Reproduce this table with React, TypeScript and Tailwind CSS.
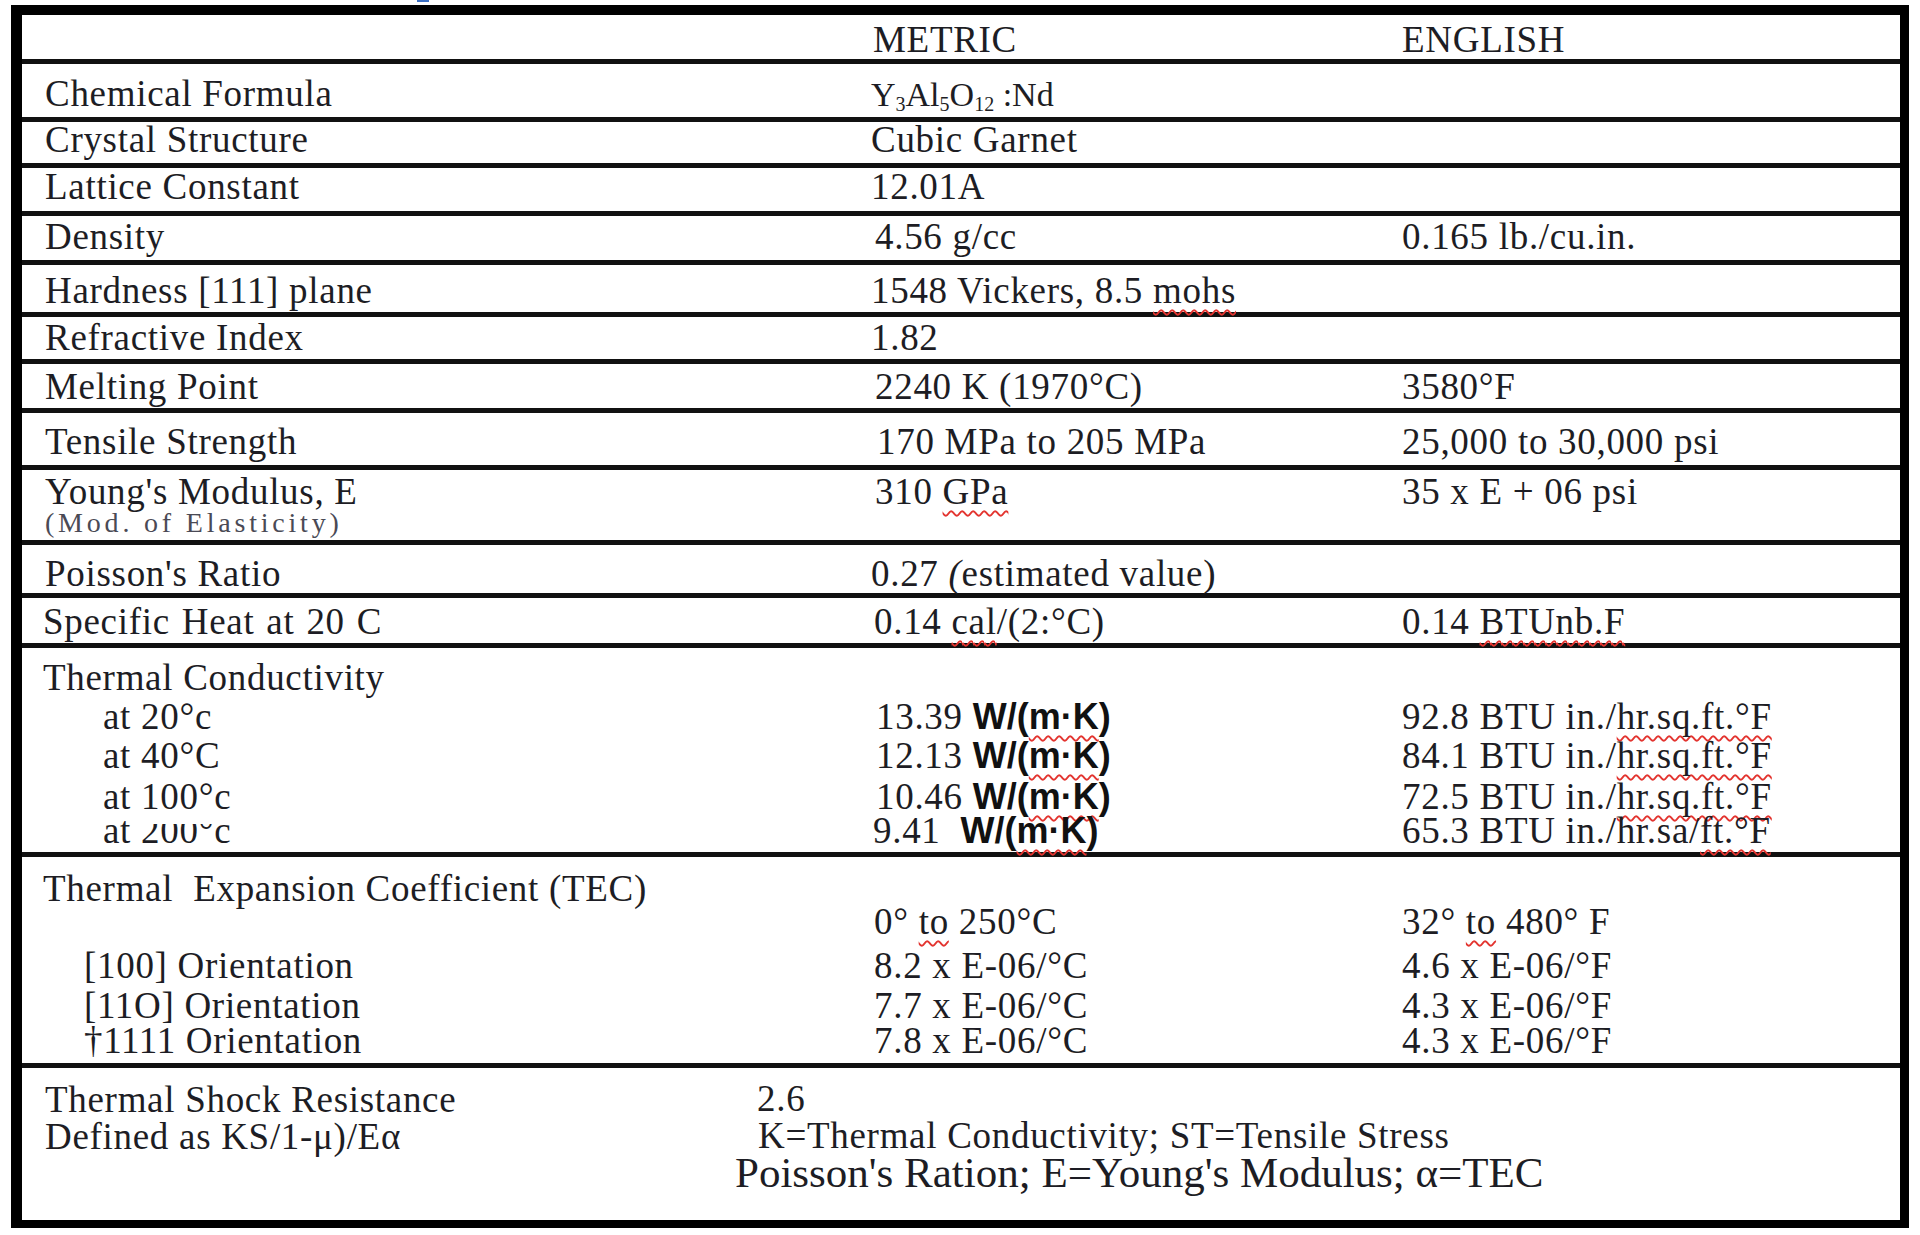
import type { ReactNode } from 'react';

function Sq({ children }: { children: ReactNode }) {
  return (
    <span className="underline decoration-wavy decoration-[#e3342f] decoration-[1.5px] underline-offset-[6px] [text-decoration-skip-ink:none]">
      {children}
    </span>
  );
}

function Line() {
  return <div className="h-[5px] bg-[#111]" />;
}

function Row({
  h,
  pt,
  label,
  metric,
  english,
}: {
  h: string;
  pt: string;
  label?: ReactNode;
  metric?: ReactNode;
  english?: ReactNode;
}) {
  return (
    <div className={`grid grid-cols-[849px_531px_1fr] ${h} ${pt}`}>
      <div className="pl-[23px] whitespace-pre">{label}</div>
      <div className="whitespace-pre">{metric}</div>
      <div className="whitespace-pre">{english}</div>
    </div>
  );
}

function Sub({ h, label, metric, english }: { h: string; label?: ReactNode; metric?: ReactNode; english?: ReactNode }) {
  return (
    <div className={`grid grid-cols-[849px_531px_1fr] ${h}`}>
      <div className="whitespace-pre">{label}</div>
      <div className="whitespace-pre">{metric}</div>
      <div className="whitespace-pre">{english}</div>
    </div>
  );
}

function Wmk({ gap = ' ' }: { gap?: string }) {
  return (
    <span className="font-['Liberation_Sans',Arial,sans-serif] font-bold tracking-normal text-[36px] text-[#111]">
      {gap}W/(<Sq>m·K</Sq>)
    </span>
  );
}

export default function App() {
  return (
    <div className="w-[1920px] h-[1235px] bg-white overflow-hidden font-['Liberation_Serif','Times_New_Roman',serif] text-[37px] leading-[33px] tracking-[0.7px] text-[#1d1d24]">
      <div className="h-[5px] pl-[417px]">
        <div className="h-[2px] w-[12px] bg-[#3b6fc4]" />
      </div>

      <div className="ml-[11px] w-[1898px] border-black border-t-[10px] border-l-[11px] border-r-[9px] border-b-[8px]">
        <Row h="h-[44px]" pt="pt-[8px]" metric={<span className="pl-[2px]">METRIC</span>} english="ENGLISH" />
        <Line />
        <Row
          h="h-[53px]"
          pt="pt-[13px]"
          label="Chemical Formula"
          metric={
            <span className="text-[34px] tracking-normal">
              Y<sub className="text-[20px]">3</sub>Al<sub className="text-[20px]">5</sub>O
              <sub className="text-[20px]">12</sub> :Nd
            </span>
          }
        />
        <Line />
        <Row h="h-[41px]" pt="pt-[1px]" label="Crystal Structure" metric="Cubic Garnet" />
        <Line />
        <Row h="h-[43px]" pt="pt-[2px]" label="Lattice Constant" metric="12.01A" />
        <Line />
        <Row h="h-[44px]" pt="pt-[4px]" label="Density" metric={<span className="pl-[4px]">4.56 g/cc</span>} english="0.165 lb./cu.in." />
        <Line />
        <Row
          h="h-[47px]"
          pt="pt-[9px]"
          label="Hardness [111] plane"
          metric={
            <>
              1548 Vickers, 8.5 <Sq>mohs</Sq>
            </>
          }
        />
        <Line />
        <Row h="h-[42px]" pt="pt-[4px]" label="Refractive Index" metric="1.82" />
        <Line />
        <Row h="h-[44px]" pt="pt-[6px]" label="Melting Point" metric={<span className="pl-[4px]">2240 K (1970°C)</span>} english="3580°F" />
        <Line />
        <Row
          h="h-[52px]"
          pt="pt-[12px]"
          label="Tensile Strength"
          metric={<span className="pl-[6px]">170 MPa to 205 MPa</span>}
          english="25,000 to 30,000 psi"
        />
        <Line />

        <div className="grid grid-cols-[849px_531px_1fr] h-[70px] pt-[5px]">
          <div className="pl-[23px]">
            <div className="h-[34px]">Young's Modulus, E</div>
            <div className="text-[28px] leading-[28px] tracking-[3.8px] text-[#4a4a55]">(Mod. of Elasticity)</div>
          </div>
          <div className="pl-[4px]">
            310 <Sq>GPa</Sq>
          </div>
          <div>35 x E + 06 psi</div>
        </div>
        <Line />
        <Row
          h="h-[48px]"
          pt="pt-[12px]"
          label="Poisson's Ratio"
          metric={
            <>
              0.27 <i>(</i>estimated value)
            </>
          }
        />
        <Line />
        <Row
          h="h-[45px]"
          pt="pt-[7px]"
          label={<span className="-ml-[2px] [word-spacing:2px]">Specific Heat at 20 C</span>}
          metric={
            <span className="pl-[3px]">
              0.14 <Sq>cal</Sq>/(2:°C)
            </span>
          }
          english={
            <>
              0.14 <Sq>BTUnb.F</Sq>
            </>
          }
        />
        <Line />

        <div className="h-[204px] pt-[13px]">
          <Sub h="h-[39px]" label={<span className="pl-[21px]">Thermal Conductivity</span>} />
          <Sub
            h="h-[39px]"
            label={<span className="pl-[81px]">at 20°c</span>}
            metric={
              <span className="pl-[5px]">
                13.39
                <Wmk />
              </span>
            }
            english={
              <>
                92.8 BTU in./<Sq>hr.sq.ft.°F</Sq>
              </>
            }
          />
          <Sub
            h="h-[41px]"
            label={<span className="pl-[81px]">at 40°C</span>}
            metric={
              <span className="pl-[5px]">
                12.13
                <Wmk />
              </span>
            }
            english={
              <>
                84.1 BTU in./<Sq>hr.sq.ft.°F</Sq>
              </>
            }
          />
          <Sub
            h="h-[34px]"
            label={<span className="pl-[81px]">at 100°c</span>}
            metric={
              <span className="pl-[5px]">
                10.46
                <Wmk />
              </span>
            }
            english={
              <>
                72.5 BTU in./<Sq>hr.sq.ft.°F</Sq>
              </>
            }
          />
          <Sub
            h="h-[34px]"
            label={
              <span className="pl-[81px]">
                at <span className="inline-block [clip-path:inset(10px_0_0_0)]">200°</span>c
              </span>
            }
            metric={
              <span className="pl-[2px]">
                9.41
                <Wmk gap="  " />
              </span>
            }
            english={
              <>
                65.3 BTU in./hr.sa/<Sq>ft.°F</Sq>
              </>
            }
          />
        </div>
        <Line />

        <div className="h-[206px] pt-[15px]">
          <Sub h="h-[33px]" label={<span className="pl-[21px]">Thermal  Expansion Coefficient (TEC)</span>} />
          <Sub
            h="h-[44px]"
            metric={
              <span className="pl-[3px]">
                0° <Sq>to</Sq> 250°C
              </span>
            }
            english={
              <>
                32° <Sq>to</Sq> 480° F
              </>
            }
          />
          <Sub
            h="h-[40px]"
            label={<span className="pl-[62px]">[100] Orientation</span>}
            metric={<span className="pl-[3px]">8.2 x E-06/°C</span>}
            english="4.6 x E-06/°F"
          />
          <Sub
            h="h-[35px]"
            label={<span className="pl-[62px]">[11O] Orientation</span>}
            metric={<span className="pl-[3px]">7.7 x E-06/°C</span>}
            english="4.3 x E-06/°F"
          />
          <Sub
            h="h-[35px]"
            label={<span className="pl-[62px]">†1111 Orientation</span>}
            metric={<span className="pl-[3px]">7.8 x E-06/°C</span>}
            english="4.3 x E-06/°F"
          />
        </div>
        <Line />

        <div className="flex h-[152px]">
          <div className="w-[713px] pl-[23px] pt-[15px]">
            <div className="h-[37px]">Thermal Shock Resistance</div>
            <div>Defined as KS/1-μ)/Eα</div>
          </div>
          <div className="pt-[14px]">
            <div className="h-[37px] pl-[22px]">2.6</div>
            <div className="h-[35px] pl-[23px]">K=Thermal Conductivity; ST=Tensile Stress</div>
            <div className="text-[43px] leading-[38px] tracking-normal">
              Poisson's Ration; E=Young's Modulus; α=TEC
            </div>
          </div>
        </div>
      </div>
    </div>
  );
}
